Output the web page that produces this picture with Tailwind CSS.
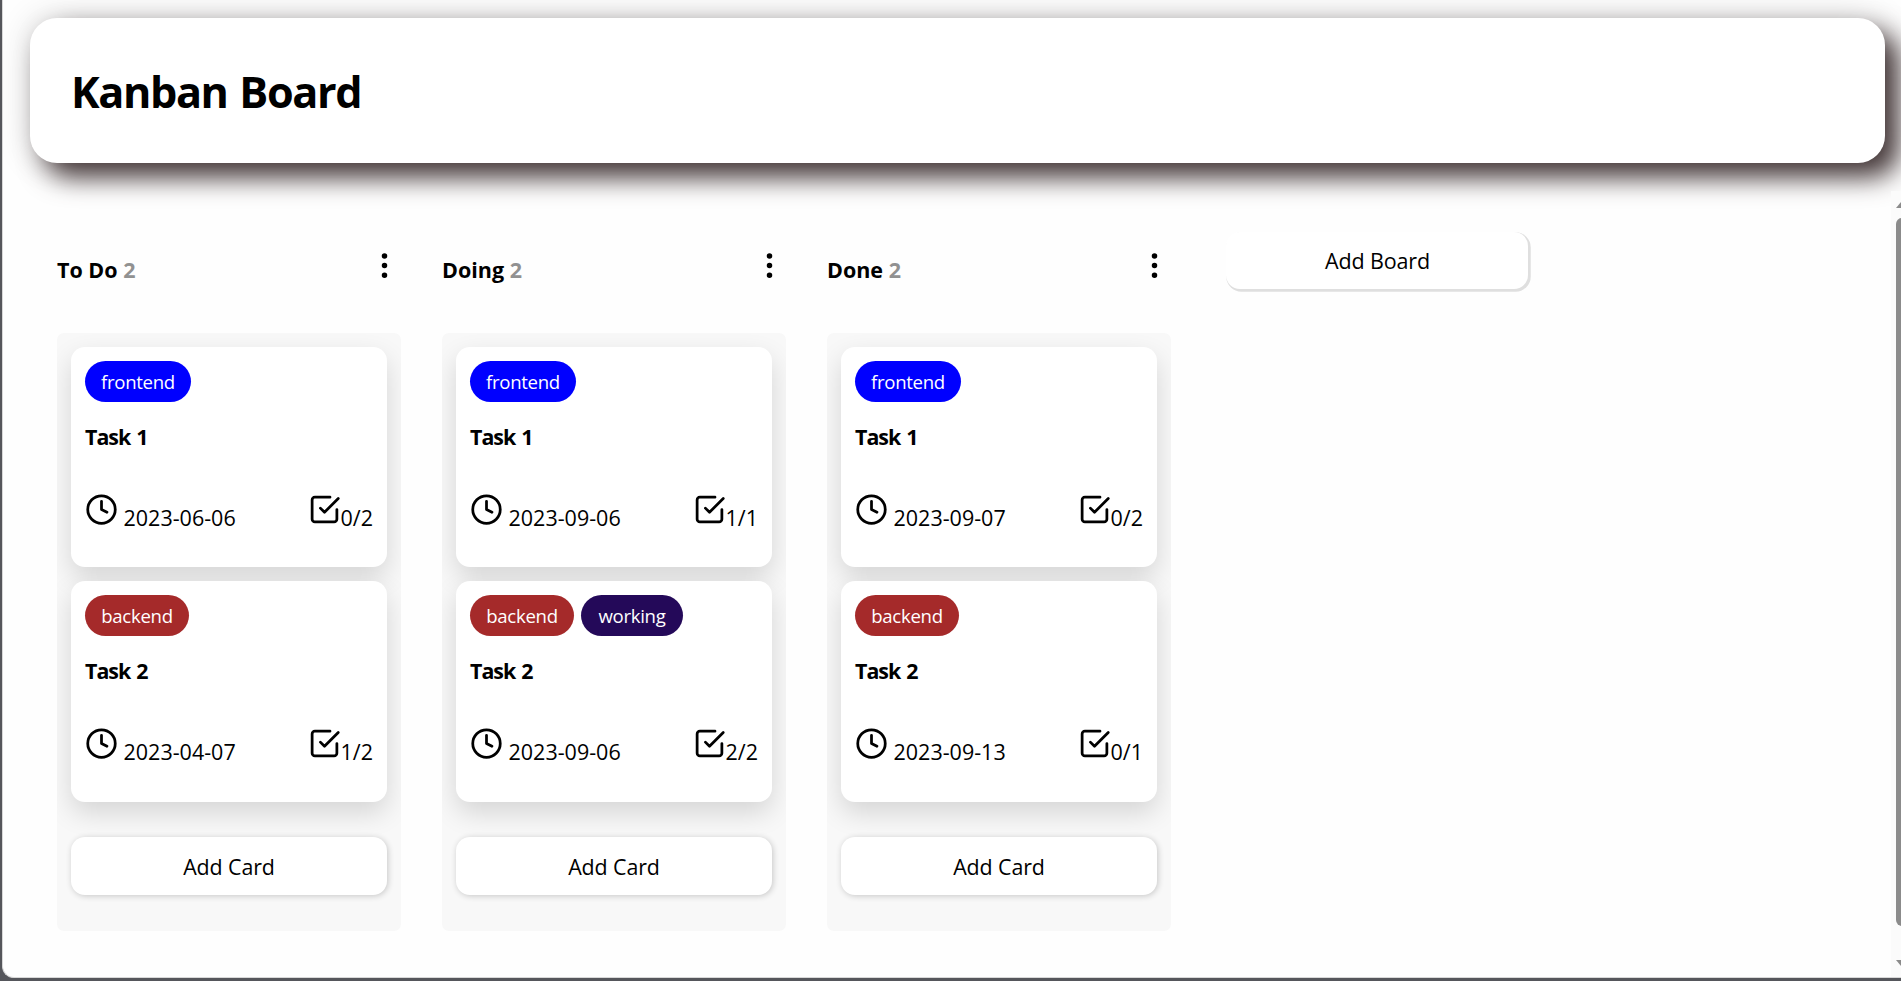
<!DOCTYPE html>
<html lang="en">
<head>
<meta charset="utf-8">
<title>Kanban Board</title>
<script src="https://cdn.jsdelivr.net/npm/@tailwindcss/browser@4"></script>
</head>
<body class="h-[981px] overflow-hidden bg-[#55565b] pl-[2px] text-black font-['Open_Sans','Noto_Sans',sans-serif]">
<div class="relative flex h-[978px] flex-col overflow-hidden rounded-bl-[12px] border-b border-l border-[#d8d8d8] bg-[#fefefe]">
  <header class="mt-[18px] ml-[27px] flex h-[145px] w-[1855px] shrink-0 items-center rounded-[27px] bg-white pl-[41px] shadow-[14px_14px_27px_#433637,0_0_34px_rgba(0,0,0,0.16)]">
    <h1 class="pt-[3px] text-[43.2px] leading-[60px] font-bold tracking-[-1.4px] [word-spacing:2px]">Kanban Board</h1>
  </header>
  <main id="board" class="flex items-start gap-[41px] pt-[69px] pl-[54px]">
    <button class="ml-[14px] h-[57px] w-[302px] rounded-[14px] bg-white pt-[2px] pl-px text-[21.5px] tracking-[-0.15px] shadow-[1.5px_1.5px_0_1.25px_#dfdfdf]">Add Board</button>
  </main>
  <div class="absolute top-[191px] right-0 h-[786px] w-[10px] bg-[#fbfbfb]">
    <svg class="absolute top-[10px] left-[5px]" width="5" height="7" viewBox="0 0 5 7"><path d="M0 7L5 1V7Z" fill="#8b8b8b"/></svg>
    <div class="absolute top-[27px] left-[5px] h-[708px] w-[12px] rounded-[6px] bg-[#8b8b8b]"></div>
    <svg class="absolute top-[769px] left-[5px]" width="5" height="6" viewBox="0 0 5 6"><path d="M0 0H5V6Z" fill="#8b8b8b"/></svg>
  </div>
</div>
<script>
const tags = {
  frontend: '<span class="flex h-[41px] w-[106px] items-center justify-center rounded-full bg-[#0000ff] text-[18.6px] tracking-[-0.3px] text-white"><span>frontend</span></span>',
  backend: '<span class="flex h-[41px] w-[104px] items-center justify-center rounded-full bg-[#a52a2a] text-[18.6px] tracking-[-0.3px] text-white"><span>backend</span></span>',
  working: '<span class="flex h-[41px] w-[102px] items-center justify-center rounded-full bg-[#240959] text-[18.6px] tracking-[-0.3px] text-white"><span>working</span></span>'
};
const icon = 'width="33" height="33" viewBox="0 0 24 24" fill="none" stroke="currentColor" stroke-width="2" stroke-linecap="round" stroke-linejoin="round"';
const card = ([labels, title, date, done]) => `
  <article class="h-[220px] rounded-[14px] bg-white p-[14px] shadow-[0_11px_27px_rgba(0,0,0,0.14)] last-of-type:h-[221px]">
    <div class="flex gap-[7px]">${labels.map(l => tags[l]).join('')}</div>
    <p class="mt-[20px] text-[21.4px] leading-[30px] font-bold tracking-[-1px] [word-spacing:1.5px]">${title}</p>
    <div class="mt-[40px] flex h-[40px] justify-between text-[21.5px] leading-[30px]">
      <div class="flex"><svg class="mt-[0.5px]" ${icon}><circle cx="12" cy="12" r="10"/><path d="M12 6v6l4 2"/></svg><span class="pt-[11px] pl-[5.5px]">${date}</span></div>
      <div class="flex"><svg class="mt-[0.5px]" ${icon}><path d="M9 11l3 3L22 4"/><path d="M21 12v7a2 2 0 0 1-2 2H5a2 2 0 0 1-2-2V5a2 2 0 0 1 2-2h11"/></svg><span class="pt-[11px]">${done}</span></div>
    </div>
  </article>`;
const columns = [
  ['To Do', [[['frontend'], 'Task 1', '2023-06-06', '0/2'], [['backend'], 'Task 2', '2023-04-07', '1/2']]],
  ['Doing', [[['frontend'], 'Task 1', '2023-09-06', '1/1'], [['backend', 'working'], 'Task 2', '2023-09-06', '2/2']]],
  ['Done', [[['frontend'], 'Task 1', '2023-09-07', '0/2'], [['backend'], 'Task 2', '2023-09-13', '0/1']]]
];
document.getElementById('board').insertAdjacentHTML('afterbegin', columns.map(([name, cards]) => `
  <section class="w-[344px]">
    <div class="flex h-[101px] justify-between pt-[17px]">
      <h2 class="pt-[6px] text-[21.5px] leading-[30px] font-bold">${name} <span class="text-[#919191]">2</span></h2>
      <svg ${icon}><circle cx="12" cy="12" r="1"/><circle cx="12" cy="5" r="1"/><circle cx="12" cy="19" r="1"/></svg>
    </div>
    <div class="flex h-[598px] flex-col gap-[14px] overflow-hidden rounded-[7px] bg-[#f8f8f8] p-[14px]">
      ${cards.map(card).join('')}
      <button class="mt-[21px] h-[58px] shrink-0 rounded-[14px] bg-white pt-[3px] text-[21.4px] tracking-[-0.1px] shadow-[1px_1px_6px_rgba(0,0,0,0.2)]">Add Card</button>
    </div>
  </section>`).join(''));
</script>
</body>
</html>
